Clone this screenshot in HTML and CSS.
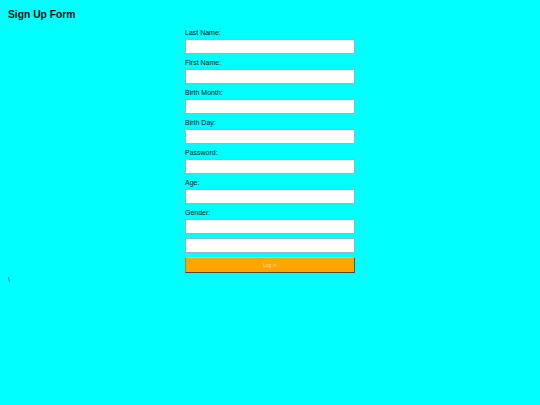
FILE: index.html
```html
<!DOCTYPE html>
<html lang="en">
<head>
<meta charset="utf-8">
<title>Sign Up Form</title>
<link rel="stylesheet" href="styles.css">
</head>
<body>
<h1 class="title">Sign Up Form</h1>
<form class="signup">
  <label class="field-label" for="last">Last Name:</label>
  <input class="field-input" id="last" type="text">
  <label class="field-label" for="first">First Name:</label>
  <input class="field-input" id="first" type="text">
  <label class="field-label" for="month">Birth Month:</label>
  <input class="field-input" id="month" type="text">
  <label class="field-label" for="day">Birth Day:</label>
  <input class="field-input" id="day" type="text">
  <label class="field-label" for="pw">Password:</label>
  <input class="field-input" id="pw" type="password">
  <label class="field-label" for="age">Age:</label>
  <input class="field-input" id="age" type="text">
  <label class="field-label" for="gender">Gender:</label>
  <input class="field-input field-input--tight" id="gender" type="text">
  <input class="field-input field-input--tight" type="text">
  <button class="submit" type="button">Log in</button>
</form>
<p class="note">\</p>
</body>
</html>
```

FILE: styles.css
```css
html, body {
  background: #00ffff;
}
body {
  margin: 8px;
  font-family: "Liberation Sans", Arial, sans-serif;
  color: #000;
}
.title {
  margin: 0 0 8px;
  padding-top: 1px;
  font-size: 10.3px;
  line-height: 12px;
  font-weight: bold;
  color: #111;
}
.signup {
  width: 170px;
  margin: 0 auto;
  display: flex;
  flex-direction: column;
}
.field-label {
  display: block;
  font-size: 7px;
  line-height: 8px;
  margin-bottom: 2px;
  color: #111;
}
.field-input {
  box-sizing: border-box;
  width: 170px;
  height: 15px;
  margin: 0 0 5px;
  padding: 0 2px;
  border: 1px solid #8fb8c0;
  background: #fff;
  font-size: 6px;
  outline: none;
}
.field-input--tight {
  margin-bottom: 4px;
}
.submit {
  box-sizing: border-box;
  width: 170px;
  height: 16px;
  margin: 0;
  padding: 0;
  background: #ffa500;
  border: 1px solid;
  border-color: #e6c27a #5a5a3a #4a4a3a #9a8a40;
  color: #f6dcae;
  font-family: "Liberation Sans", Arial, sans-serif;
  font-size: 5px;
  line-height: 14px;
  text-align: center;
}
.note {
  margin: 3px 0 0;
  font-size: 7px;
  line-height: 8px;
  color: #111;
}
```
